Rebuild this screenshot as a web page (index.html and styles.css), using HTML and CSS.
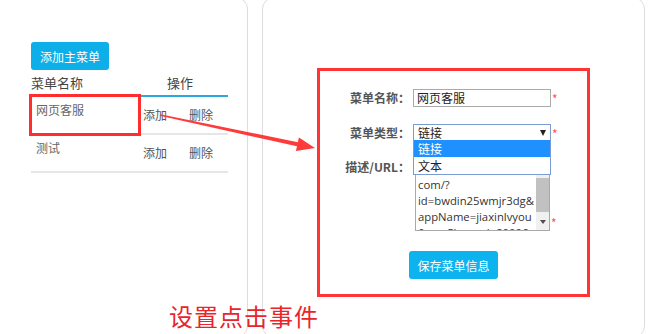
FILE: index.html
```html
<!DOCTYPE html>
<html lang="zh-CN">
<head>
  <meta charset="UTF-8" />
  <title>菜单设置</title>
  <link rel="stylesheet" href="styles.css">
</head>
<body>
  <div class="page">
    <!-- 菜单列表 -->
    <div class="panel panel-left">
      <button class="btn btn-add">添加主菜单</button>
      <div class="menu-table">
        <div class="menu-head">
          <div class="col-name">菜单名称</div>
          <div class="col-ops">操作</div>
        </div>
        <div class="menu-row">
          <div class="cell-name">网页客服</div>
          <div class="cell-ops"><span>添加</span><span>删除</span></div>
        </div>
        <div class="menu-row">
          <div class="cell-name">测试</div>
          <div class="cell-ops"><span>添加</span><span>删除</span></div>
        </div>
      </div>
    </div>

    <!-- 菜单编辑 -->
    <div class="panel panel-right">
      <div class="form-box">
        <div class="form-row">
          <label class="form-label">菜单名称：</label>
          <div class="field field-input">网页客服</div>
          <span class="req">*</span>
        </div>
        <div class="form-row">
          <label class="form-label">菜单类型：</label>
          <div class="field field-select">
            <span>链接</span>
            <span class="caret"></span>
            <ul class="options">
              <li class="active">链接</li>
              <li>文本</li>
            </ul>
          </div>
          <span class="req">*</span>
        </div>
        <div class="form-row row-url">
          <label class="form-label">描述/URL：</label>
          <div class="url-box">
            <div class="url-text">com/?<br>id=bwdin25wmjr3dg&amp;<br>appName=jiaxinlvyou<br>&amp;appChannel=20006</div>
            <div class="scroll">
              <div class="thumb"></div>
              <div class="scroll-down"></div>
            </div>
          </div>
          <span class="req req-bottom">*</span>
        </div>
        <div class="form-actions">
          <button class="btn btn-save">保存菜单信息</button>
        </div>
      </div>
    </div>
  </div>

  <!-- 标注 -->
  <div class="cell-mark"></div>
  <svg class="arrow-mark" viewBox="0 0 650 334" xmlns="http://www.w3.org/2000/svg">
    <polygon points="160.2,114.2 297.8,142.3 298.9,137.4 315,148 295.9,151.1 297,146.3 159.8,115.8" fill="#ff3a3a"/>
  </svg>
  <div class="caption">设置点击事件</div>
</body>
</html>
```

FILE: styles.css
```css
html, body {
  margin: 0;
  padding: 0;
  height: 100%;
  background: #fff;
  overflow: hidden;
  font-family: "Noto Sans CJK SC", sans-serif;
  font-size: 12px;
  line-height: 16px;
  color: #555;
}

.page {
  display: flex;
  margin-top: -3px;
  height: 341px;
}

.panel {
  box-sizing: border-box;
  height: 100%;
  background: #fff;
  border: 1px solid #ddd;
}

.panel-left {
  width: 260px;
  margin-left: -12px;
  padding: 44px 0 0 42px;
  border-radius: 0 12px 12px 0;
}

.panel-right {
  width: 383px;
  margin-left: 14px;
  padding: 70px 0 0 54px;
  border-radius: 12px;
}

.btn {
  border: none;
  border-radius: 3px;
  color: #fff;
  font-family: inherit;
  font-size: 12px;
  height: 28px;
  cursor: pointer;
}

.btn-add {
  display: block;
  padding: 0 9px;
  background: #0eaee8;
}

/* 菜单列表 */
.menu-table {
  width: 197px;
}

.menu-head,
.menu-row {
  display: grid;
  grid-template-columns: 110px 87px;
}

.menu-head {
  height: 25px;
  align-items: center;
  font-size: 13px;
  color: #444;
  border-bottom: 2px solid #2aa8e0;
}

.menu-head .col-ops {
  padding-left: 26px;
}

.menu-row {
  height: 36px;
  border-bottom: 2px solid #e6e6e6;
}

.cell-name {
  padding: 5px 0 0 5px;
  color: #666;
}

.cell-ops {
  display: flex;
  align-items: center;
  gap: 22px;
  padding-left: 2px;
  white-space: nowrap;
  color: #555;
}

/* 表单 */
.form-box {
  box-sizing: border-box;
  width: 273px;
  height: 229px;
  padding-top: 18px;
  border: 3px solid #ff3535;
}

.form-row {
  display: flex;
  align-items: center;
  margin-bottom: 17px;
}

.form-label {
  width: 90px;
  margin-right: 3px;
  text-align: right;
  font-weight: bold;
  color: #555;
}

.field {
  box-sizing: border-box;
  width: 138px;
  height: 18px;
  background: #fff;
  color: #222;
}

.field-input {
  padding-left: 3px;
  border: 1px solid #aaa;
  line-height: 16px;
}

.field-select {
  position: relative;
  display: flex;
  align-items: center;
  justify-content: space-between;
  padding: 0 4px;
  border: 1px solid #7a9cd3;
}

.caret {
  width: 0;
  height: 0;
  border-left: 3.5px solid transparent;
  border-right: 3.5px solid transparent;
  border-top: 6px solid #222;
}

.options {
  position: absolute;
  top: 100%;
  left: -1px;
  width: 138px;
  box-sizing: border-box;
  margin: -1px 0 0;
  padding: 0;
  list-style: none;
  background: #fff;
  border: 1px solid #7a9cd3;
  border-top: none;
  z-index: 2;
}

.options li {
  height: 17px;
  line-height: 17px;
  padding-left: 4px;
  color: #222;
}

.options li.active {
  background: #1e90ff;
  color: #fff;
}

.req {
  margin-left: 1px;
  color: #ff5050;
  font-size: 12px;
  line-height: 12px;
  align-self: flex-start;
  margin-top: 4px;
}

.row-url {
  align-items: flex-start;
  margin-bottom: 20px;
}

.url-box {
  box-sizing: border-box;
  display: flex;
  width: 135px;
  height: 72px;
  margin-left: 2px;
  border: 1px solid #a9a9a9;
}

.url-text {
  flex: 1;
  overflow: hidden;
  padding: 17px 0 0 2px;
  font-family: "Open Sans", "Noto Sans CJK SC", sans-serif;
  font-size: 11.3px;
  line-height: 16px;
  color: #333;
  white-space: nowrap;
}

.scroll {
  width: 13px;
  display: flex;
  flex-direction: column;
  background: #f0f0f0;
}

.thumb {
  height: 34px;
  margin-top: 18px;
  background: #c1c1c1;
}

.scroll-down {
  margin-top: auto;
  height: 16px;
  display: flex;
  justify-content: center;
  align-items: center;
}

.scroll-down::after {
  content: "";
  border-left: 3.5px solid transparent;
  border-right: 3.5px solid transparent;
  border-top: 4px solid #505050;
}

.req-bottom {
  align-self: flex-end;
  margin-top: 0;
  margin-bottom: 2px;
}

.form-actions {
  display: flex;
  justify-content: center;
}

.btn-save {
  padding: 0 8px;
  background: #0cb3ee;
}

/* 标注 */
.cell-mark {
  position: absolute;
  left: 29px;
  top: 94px;
  width: 112px;
  height: 42px;
  box-sizing: border-box;
  border: 3px solid #ff2d2d;
}

.arrow-mark {
  position: absolute;
  left: 0;
  top: 0;
  width: 650px;
  height: 334px;
  pointer-events: none;
}

.caption {
  position: absolute;
  left: 169px;
  top: 302px;
  font-size: 24px;
  line-height: 28px;
  letter-spacing: 1px;
  color: #e8252b;
}
```
